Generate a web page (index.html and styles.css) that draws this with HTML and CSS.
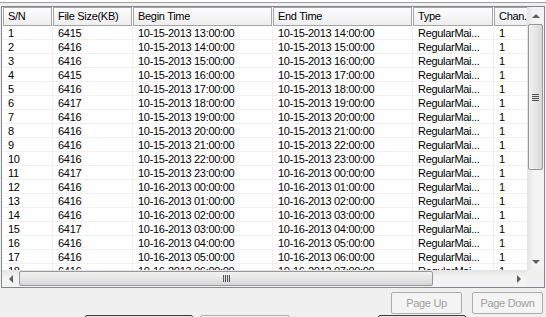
FILE: index.html
```html
<!DOCTYPE html>
<html lang="en">
<head>
    <meta charset="UTF-8">
    <title>Record List</title>
    <link rel="stylesheet" href="styles.css">
</head>
<body>
    <div class="topbar"></div>
    <div class="list">
        <div class="view">
            <div class="row head">
                <div class="hcell">S/N</div>
                <div class="hcell">File Size(KB)</div>
                <div class="hcell">Begin Time</div>
                <div class="hcell">End Time</div>
                <div class="hcell">Type</div>
                <div class="hcell">Chan.</div>
            </div>
            <div class="row"><div>1</div><div>6415</div><div>10-15-2013 13:00:00</div><div>10-15-2013 14:00:00</div><div>RegularMai...</div><div>1</div></div>
            <div class="row"><div>2</div><div>6416</div><div>10-15-2013 14:00:00</div><div>10-15-2013 15:00:00</div><div>RegularMai...</div><div>1</div></div>
            <div class="row"><div>3</div><div>6416</div><div>10-15-2013 15:00:00</div><div>10-15-2013 16:00:00</div><div>RegularMai...</div><div>1</div></div>
            <div class="row"><div>4</div><div>6415</div><div>10-15-2013 16:00:00</div><div>10-15-2013 17:00:00</div><div>RegularMai...</div><div>1</div></div>
            <div class="row"><div>5</div><div>6416</div><div>10-15-2013 17:00:00</div><div>10-15-2013 18:00:00</div><div>RegularMai...</div><div>1</div></div>
            <div class="row"><div>6</div><div>6417</div><div>10-15-2013 18:00:00</div><div>10-15-2013 19:00:00</div><div>RegularMai...</div><div>1</div></div>
            <div class="row"><div>7</div><div>6416</div><div>10-15-2013 19:00:00</div><div>10-15-2013 20:00:00</div><div>RegularMai...</div><div>1</div></div>
            <div class="row"><div>8</div><div>6416</div><div>10-15-2013 20:00:00</div><div>10-15-2013 21:00:00</div><div>RegularMai...</div><div>1</div></div>
            <div class="row"><div>9</div><div>6416</div><div>10-15-2013 21:00:00</div><div>10-15-2013 22:00:00</div><div>RegularMai...</div><div>1</div></div>
            <div class="row"><div>10</div><div>6416</div><div>10-15-2013 22:00:00</div><div>10-15-2013 23:00:00</div><div>RegularMai...</div><div>1</div></div>
            <div class="row"><div>11</div><div>6417</div><div>10-15-2013 23:00:00</div><div>10-16-2013 00:00:00</div><div>RegularMai...</div><div>1</div></div>
            <div class="row"><div>12</div><div>6416</div><div>10-16-2013 00:00:00</div><div>10-16-2013 01:00:00</div><div>RegularMai...</div><div>1</div></div>
            <div class="row"><div>13</div><div>6416</div><div>10-16-2013 01:00:00</div><div>10-16-2013 02:00:00</div><div>RegularMai...</div><div>1</div></div>
            <div class="row"><div>14</div><div>6416</div><div>10-16-2013 02:00:00</div><div>10-16-2013 03:00:00</div><div>RegularMai...</div><div>1</div></div>
            <div class="row"><div>15</div><div>6417</div><div>10-16-2013 03:00:00</div><div>10-16-2013 04:00:00</div><div>RegularMai...</div><div>1</div></div>
            <div class="row"><div>16</div><div>6416</div><div>10-16-2013 04:00:00</div><div>10-16-2013 05:00:00</div><div>RegularMai...</div><div>1</div></div>
            <div class="row"><div>17</div><div>6416</div><div>10-16-2013 05:00:00</div><div>10-16-2013 06:00:00</div><div>RegularMai...</div><div>1</div></div>
            <div class="row"><div>18</div><div>6416</div><div>10-16-2013 06:00:00</div><div>10-16-2013 07:00:00</div><div>RegularMai...</div><div>1</div></div>
        </div>
        <div class="vscroll">
            <div class="arrow"><span class="tri up"></span></div>
            <div class="thumb vthumb"><span class="grip"></span></div>
            <div class="track"></div>
            <div class="arrow"><span class="tri down"></span></div>
        </div>
        <div class="hscroll">
            <div class="arrow"><span class="tri left"></span></div>
            <div class="thumb hthumb"><span class="grip"></span></div>
            <div class="track"></div>
            <div class="arrow"><span class="tri right"></span></div>
        </div>
        <div class="corner"></div>
    </div>

    <div class="buttons">
        <button class="btn" disabled>Page Up</button>
        <button class="btn" disabled>Page Down</button>
    </div>

    <div class="lower">
        <div class="peek dark one"></div>
        <div class="peek light two"></div>
        <div class="peek dark three"></div>
    </div>
</body>
</html>
```

FILE: styles.css
```css
body {
    margin: 0;
    background: #f0f0f0;
    font-family: "Liberation Sans", Arial, sans-serif;
    font-size: 11px;
    letter-spacing: -0.3px;
    color: #000;
    overflow: hidden;
}
.topbar {
    height: 2px;
    background: #fff;
    border-bottom: 1px solid #a0a0a0;
    margin-bottom: 3px;
}
.list {
    margin-left: 1px;
    width: 542px;
    height: 280px;
    border: 1px solid #828790;
    background: #fff;
    display: grid;
    grid-template-columns: 1fr 17px;
    grid-template-rows: 1fr 17px;
}
.view {
    overflow: hidden;
    padding-left: 1px;
}
.row {
    display: grid;
    grid-template-columns: 50px 80px 140px 140px 81px 60px;
    height: 14px;
    line-height: 14px;
    white-space: nowrap;
}
.row div {
    padding-left: 5px;
    border-right: 1px solid #f0f0f0;
    border-bottom: 1px solid #f0f0f0;
    overflow: hidden;
}
.row.head {
    height: 19px;
    line-height: 17px;
}
.row.head .hcell {
    padding-left: 4px;
    margin-right: 1px;
    border: 1px solid #a5a5a5;
    background: linear-gradient(#fdfdfd, #eeeeee);
}
.vscroll {
    display: flex;
    flex-direction: column;
    background: linear-gradient(90deg, #e3e3e3, #f3f3f3 40%, #f3f3f3);
}
.hscroll {
    display: flex;
    background: linear-gradient(#e3e3e3, #f3f3f3 40%, #f3f3f3);
}
.corner {
    background: #f0f0f0;
}
.arrow {
    width: 17px;
    height: 17px;
    flex: none;
    display: flex;
    align-items: center;
    justify-content: center;
}
.track {
    flex: 1;
}
.tri {
    width: 0;
    height: 0;
    border: 4px solid transparent;
}
.tri.up {
    border-bottom: 4px solid #606060;
    border-top-width: 0;
}
.tri.down {
    border-top: 4px solid #606060;
    border-bottom-width: 0;
}
.tri.left {
    border-right: 4px solid #606060;
    border-left-width: 0;
}
.tri.right {
    border-left: 4px solid #606060;
    border-right-width: 0;
}
.thumb {
    flex: none;
    box-sizing: border-box;
    border: 1px solid #979797;
    border-radius: 2px;
    display: flex;
    align-items: center;
    justify-content: center;
}
.vthumb {
    height: 146px;
    margin: 0 1px;
    background: linear-gradient(90deg, #f2f2f2, #e6e6e6 50%, #d6d6d6);
}
.hthumb {
    width: 414px;
    margin: 1px 0;
    background: linear-gradient(#f2f2f2, #e6e6e6 50%, #d6d6d6);
}
.vthumb .grip {
    width: 7px;
    height: 7px;
    background: repeating-linear-gradient(#555 0 1px, #ddd 1px 2px);
}
.hthumb .grip {
    width: 7px;
    height: 7px;
    background: repeating-linear-gradient(90deg, #555 0 1px, #ddd 1px 2px);
}
.buttons {
    display: flex;
    justify-content: flex-end;
    gap: 10px;
    padding: 4px 3px 0 0;
}
.btn {
    width: 71px;
    height: 22px;
    padding: 0;
    border: 1px solid #adadad;
    border-radius: 2px;
    background: #f4f4f4;
    color: #a0a0a0;
    font-family: "Liberation Sans", Arial, sans-serif;
    font-size: 11px;
    letter-spacing: -0.3px;
}
.lower {
    display: flex;
    margin-top: 1px;
}
.peek {
    height: 6px;
    border-radius: 2px;
}
.peek.dark {
    border: 1px solid #3c3c3c;
    background: #e6e6e6;
}
.peek.light {
    border: 1px solid #adadad;
    background: #f4f4f4;
}
.one {
    margin-left: 85px;
    width: 106px;
}
.two {
    margin-left: 7px;
    width: 88px;
}
.three {
    margin-left: 88px;
    width: 86px;
}
```
